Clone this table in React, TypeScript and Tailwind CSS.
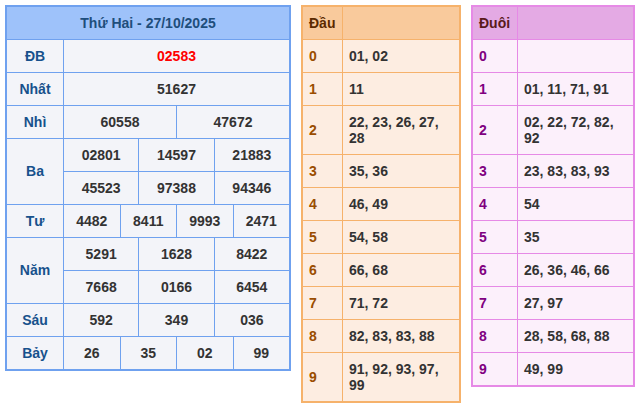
import React from "react";

type Prize = { label: string; nums: string[]; rows?: number };

const prizes: Prize[] = [
  { label: "ĐB", nums: ["02583"] },
  { label: "Nhất", nums: ["51627"] },
  { label: "Nhì", nums: ["60558", "47672"] },
  { label: "Ba", nums: ["02801", "14597", "21883", "45523", "97388", "94346"], rows: 2 },
  { label: "Tư", nums: ["4482", "8411", "9993", "2471"] },
  { label: "Năm", nums: ["5291", "1628", "8422", "7668", "0166", "6454"], rows: 2 },
  { label: "Sáu", nums: ["592", "349", "036"] },
  { label: "Bảy", nums: ["26", "35", "02", "99"] },
];

const spanFor = (n: number) => {
  if (n === 1) return "col-span-12";
  if (n === 2) return "col-span-6";
  if (n === 3) return "col-span-4";
  return "col-span-3";
};

const dau: string[] = [
  "01, 02",
  "11",
  "22, 23, 26, 27, 28",
  "35, 36",
  "46, 49",
  "54, 58",
  "66, 68",
  "71, 72",
  "82, 83, 83, 88",
  "91, 92, 93, 97, 99",
];

const duoi: string[] = [
  "",
  "01, 11, 71, 91",
  "02, 22, 72, 82, 92",
  "23, 83, 83, 93",
  "54",
  "35",
  "26, 36, 46, 66",
  "27, 97",
  "28, 58, 68, 88",
  "49, 99",
];

const ResultTable: React.FC = () => (
  <div className="w-[286px] border-2 border-[#6fa1ef] bg-[#6fa1ef] grid grid-cols-[56px_repeat(12,minmax(0,1fr))] gap-px">
    <div className="col-span-13 h-8 flex items-center justify-center bg-[#9ec2fa] text-[#1e4e7c]">
      Thứ Hai - 27/10/2025
    </div>
    {prizes.map((p) => {
      const perRow = p.rows ? p.nums.length / p.rows : p.nums.length;
      return (
        <React.Fragment key={p.label}>
          <div
            className={`${p.rows ? "row-span-2" : ""} flex items-center justify-center bg-[#f3f4f9] text-[#17518c]`}
          >
            {p.label}
          </div>
          {p.nums.map((n, i) => (
            <div
              key={i}
              className={`${spanFor(perRow)} h-8 flex items-center justify-center bg-[#f3f4f9] ${
                p.label === "ĐB" ? "text-[#ff0000]" : "text-[#333333]"
              }`}
            >
              {n}
            </div>
          ))}
        </React.Fragment>
      );
    })}
  </div>
);

interface LotoProps {
  title: string;
  values: string[];
  frame: string; // width, columns, border + line colour
  head: string;
  cell: string;
  keyText: string;
  headText: string;
}

const LotoTable: React.FC<LotoProps> = ({ title, values, frame, head, cell, keyText, headText }) => (
  <div className={`grid gap-px border-2 ${frame}`}>
    <div className={`h-8 flex items-center px-1.5 ${head} ${headText}`}>{title}</div>
    <div className={`h-8 ${head}`}></div>
    {values.map((v, i) => (
      <React.Fragment key={i}>
        <div className={`flex items-center px-1.5 ${cell} ${keyText}`}>{i}</div>
        <div className={`min-h-8 py-2 px-1.5 leading-4 flex items-center ${cell} text-[#333333]`}>{v}</div>
      </React.Fragment>
    ))}
  </div>
);

export default function App() {
  return (
    <div className="flex items-start gap-2.5 pl-[5px] pt-[5px] bg-white font-['Liberation_Sans',Arial,sans-serif] font-bold text-[14px]">
      <ResultTable />
      <LotoTable
        title="Đầu"
        values={dau}
        frame="w-[160px] grid-cols-[39px_minmax(0,1fr)] border-[#f6b26b] bg-[#f6b26b]"
        head="bg-[#f9ca9c]"
        cell="bg-[#fdede1]"
        keyText="text-[#9a4d00]"
        headText="text-[#5c2a00]"
      />
      <LotoTable
        title="Đuôi"
        values={duoi}
        frame="w-[164px] grid-cols-[44px_minmax(0,1fr)] border-[#e68ae6] bg-[#e68ae6]"
        head="bg-[#e4aae4]"
        cell="bg-[#fcf0fb]"
        keyText="text-[#800080]"
        headText="text-[#5a1a1a]"
      />
    </div>
  );
}
